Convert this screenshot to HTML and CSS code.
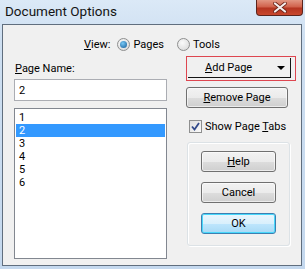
FILE: index.html
```html
<!DOCTYPE html>
<html lang="en">

<head>
    <meta charset="UTF-8" />
    <title>Document Options</title>
    <link rel="stylesheet" href="styles.css">
</head>

<body class="screen">

    <div class="window">
        <div class="titlebar">
            <span class="title">Document Options</span>
            <div class="close-btn">
                <svg width="16" height="11" viewBox="0 0 16 11">
                    <path d="M3 1.5 L13 9.5 M13 1.5 L3 9.5" stroke="#6e2418" stroke-width="3.8" stroke-linecap="round" />
                    <path d="M3 1.5 L13 9.5 M13 1.5 L3 9.5" stroke="#f4eeee" stroke-width="2.2" stroke-linecap="round" />
                </svg>
            </div>
        </div>

        <div class="client">
            <div class="view-row">
                <span class="lbl"><u>V</u>iew:</span>
                <span class="radio"><span class="radio-dot radio-on"></span>Pages</span>
                <span class="radio"><span class="radio-dot"></span>Tools</span>
            </div>

            <div class="body-row">
                <div class="left-col">
                    <div class="lbl name-lbl"><u>P</u>age Name:</div>
                    <div class="name-input">2</div>
                    <ul class="page-list">
                        <li>1</li>
                        <li class="sel">2</li>
                        <li>3</li>
                        <li>4</li>
                        <li>5</li>
                        <li>6</li>
                    </ul>
                </div>

                <div class="right-col">
                    <div class="add-wrap">
                        <div class="add-btn">
                            <span class="add-text"><u>A</u>dd Page</span>
                            <span class="arrow"></span>
                        </div>
                    </div>
                    <div class="btn remove-btn"><u>R</u>emove Page</div>
                    <div class="check">
                        <span class="check-box">
                            <svg width="9" height="9" viewBox="0 0 9 9">
                                <path d="M1 4.5 L3.5 7.5 L8 1" fill="none" stroke="#31498a" stroke-width="1.8" />
                            </svg>
                        </span>
                        <span>Show Page <u>T</u>abs</span>
                    </div>
                    <div class="group">
                        <div class="btn"><u>H</u>elp</div>
                        <div class="btn">Cancel</div>
                        <div class="btn btn-default">OK</div>
                    </div>
                </div>
            </div>
        </div>
    </div>

</body>

</html>
```

FILE: styles.css
```css
* {
    box-sizing: border-box;
}

.screen {
    margin: 0;
    width: 305px;
    height: 269px;
    overflow: hidden;
    font-family: Roboto, "Liberation Sans", sans-serif;
    font-size: 11px;
    color: rgb(0, 0, 0);
}

.window {
    width: 305px;
    height: 269px;
    background: linear-gradient(180deg, rgb(219, 233, 247) 0px, rgb(206, 223, 241) 40px, rgb(196, 216, 238) 269px);
    display: flex;
    flex-direction: column;
}

.titlebar {
    height: 24px;
    display: flex;
    align-items: flex-start;
    justify-content: space-between;
}

.title {
    font-size: 13.5px;
    margin: 3px 0 0 5px;
    color: rgb(20, 20, 20);
}

.close-btn {
    width: 47px;
    height: 16px;
    margin-right: 2px;
    border: 1px solid rgb(92, 36, 28);
    border-top: 0;
    border-radius: 0 0 4px 4px;
    background: linear-gradient(180deg, rgb(226, 150, 130) 0px, rgb(208, 96, 74) 7px, rgb(180, 52, 32) 8px, rgb(200, 72, 46) 15px);
    display: flex;
    align-items: center;
    justify-content: center;
}

.client {
    margin: 0 3px 3px 2px;
    flex: 1;
    border: 1px solid rgb(96, 110, 126);
    background-color: rgb(240, 240, 240);
    display: flex;
    flex-direction: column;
}

.view-row {
    display: flex;
    align-items: center;
    height: 14px;
    margin-top: 12px;
    padding-left: 81px;
}

.radio {
    display: flex;
    align-items: center;
    margin-left: 7px;
    gap: 3px;
}

.radio + .radio {
    margin-left: 13px;
}

.radio-dot {
    width: 13px;
    height: 13px;
    border-radius: 50%;
    border: 1px solid rgb(142, 143, 143);
    background: radial-gradient(circle at 40% 35%, rgb(250, 250, 250), rgb(214, 214, 214));
    display: inline-flex;
    align-items: center;
    justify-content: center;
}

.radio-on::after {
    content: "";
    width: 7px;
    height: 7px;
    border-radius: 50%;
    background: radial-gradient(circle at 40% 35%, rgb(120, 200, 245), rgb(20, 90, 150));
}

.body-row {
    display: flex;
    justify-content: space-between;
    margin-top: 11px;
    padding: 0 5px 0 11px;
}

.left-col {
    width: 153px;
    display: flex;
    flex-direction: column;
}

.name-lbl {
    height: 14px;
    padding-left: 1px;
}

.name-input {
    margin-top: 3px;
    height: 22px;
    border: 1px solid rgb(171, 173, 179);
    background-color: rgb(255, 255, 255);
    padding: 4px 0 0 4px;
}

.page-list {
    list-style: none;
    margin: 7px 0 0 0;
    padding: 1px;
    height: 151px;
    border: 1px solid rgb(130, 135, 144);
    background-color: rgb(255, 255, 255);
}

.page-list li {
    height: 13px;
    line-height: 13px;
    padding-left: 3px;
}

.page-list li:first-child {
    margin-top: 1px;
}

.page-list .sel {
    background-color: rgb(51, 153, 255);
    color: rgb(255, 255, 255);
}

.right-col {
    width: 111px;
    display: flex;
    flex-direction: column;
    margin-top: -6px;
}

.add-wrap {
    height: 25px;
    border: 1px solid rgb(222, 70, 80);
    margin-left: 1px;
    padding: 1px 4px 2px 1px;
}

.add-btn {
    height: 100%;
    border-right: 1px solid rgb(20, 20, 20);
    border-bottom: 1px solid rgb(20, 20, 20);
    display: flex;
    align-items: center;
    padding: 0 5px 0 17px;
    justify-content: space-between;
}

.arrow {
    width: 0;
    height: 0;
    border-left: 4px solid transparent;
    border-right: 4px solid transparent;
    border-top: 4px solid rgb(0, 0, 0);
}

.btn {
    height: 21px;
    border: 1px solid rgb(112, 112, 112);
    border-radius: 3px;
    background: linear-gradient(180deg, rgb(242, 242, 242) 0%, rgb(235, 235, 235) 50%, rgb(221, 221, 221) 51%, rgb(207, 207, 207) 100%);
    box-shadow: inset 0 0 0 1px rgba(255, 255, 255, 0.6);
    display: flex;
    align-items: center;
    justify-content: center;
}

.remove-btn {
    margin: 6px 8px 0 1px;
}

.check {
    display: flex;
    align-items: center;
    gap: 3px;
    margin: 11px 0 0 4px;
    height: 14px;
}

.check-box {
    width: 13px;
    height: 13px;
    border: 1px solid rgb(142, 143, 143);
    background: linear-gradient(135deg, rgb(222, 222, 222), rgb(250, 250, 250));
    display: inline-flex;
    align-items: center;
    justify-content: center;
}

.group {
    margin: 9px 6px 0 2px;
    height: 104px;
    border: 1px solid rgb(220, 226, 230);
    border-radius: 3px;
    box-shadow: inset 1px 1px 0 rgb(255, 255, 255), 1px 1px 0 rgb(255, 255, 255);
    padding: 8px 13px 0 13px;
    display: flex;
    flex-direction: column;
    gap: 10px;
}

.btn-default {
    border-color: rgb(60, 127, 177);
    background: linear-gradient(180deg, rgb(234, 246, 253) 0%, rgb(217, 240, 252) 50%, rgb(190, 230, 253) 51%, rgb(167, 217, 245) 100%);
    box-shadow: inset 0 0 0 1px rgb(72, 216, 251);
}
```
